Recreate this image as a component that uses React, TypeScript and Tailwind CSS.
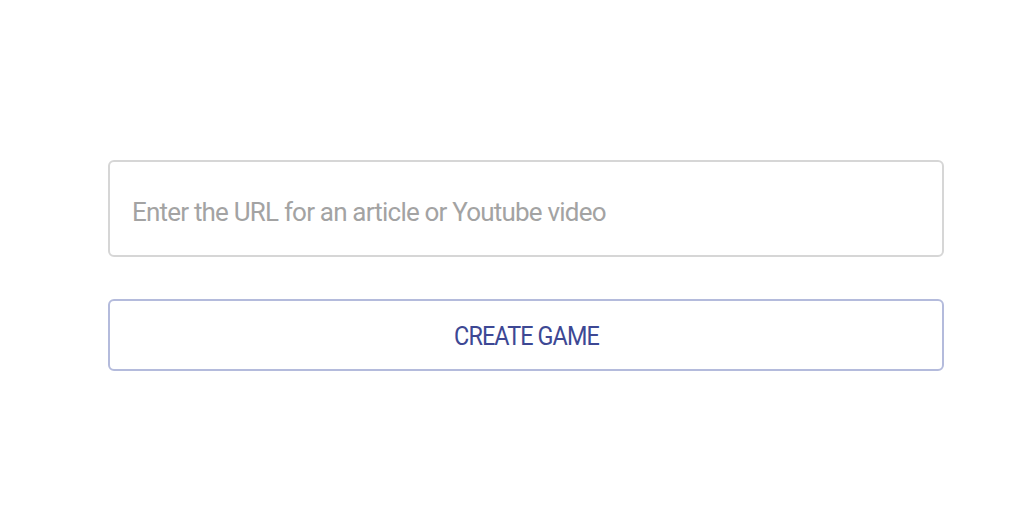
export default function App() {
  return (
    <div className="w-[1024px] h-[512px] bg-white flex flex-col pt-[160px] pl-[108px] pr-[80px] gap-[42px] font-['Roboto',sans-serif]">
      <input
        type="text"
        placeholder="Enter the URL for an article or Youtube video"
        className="
          w-full
          h-[97px]
          rounded-[6px]
          border-2
          border-[#d6d6d6]
          pl-[22px]
          pt-[6px]
          text-[26px]
          tracking-[-0.8px]
          text-[#555]
          placeholder:text-[#a3a3a3]
          outline-none
        "
      />
      <button
        className="
          w-full
          h-[72px]
          rounded-[6px]
          border-2
          border-[#b4bbdc]
          bg-white
          text-[26px]
          tracking-[-1px]
          text-[#3d4894]
          pt-[2px]
        "
      >
        <span className="inline-block scale-x-[0.9]">CREATE GAME</span>
      </button>
    </div>
  );
}
